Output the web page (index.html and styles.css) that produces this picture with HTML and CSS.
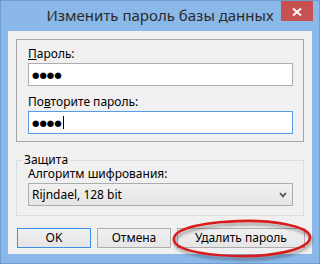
FILE: index.html
```html
<!DOCTYPE html>
<html lang="ru">
<head>
<meta charset="utf-8">
<link rel="stylesheet" href="styles.css">
</head>
<body>
<div class="window">
  <div class="titlebar">
    <span></span>
    <div class="title">Изменить пароль базы данных</div>
    <div class="close"><svg width="10" height="8" viewBox="0 0 10 8"><path d="M1 0.5 L9 7.5 M9 0.5 L1 7.5" stroke="#fff" stroke-width="2"/></svg></div>
  </div>
  <div class="client">
    <div class="panel">
      <div class="lbl"><u>П</u>ароль:</div>
      <div class="field"><span class="dots">●●●●</span></div>
      <div class="lbl lbl2">По<u>в</u>торите пароль:</div>
      <div class="field focused"><span class="dots">●●●●</span><span class="caret"></span></div>
    </div>
    <fieldset class="group">
      <legend>Защита</legend>
      <div class="lbl lbl3">Алгоритм шифрования:</div>
      <div class="combo"><span>Rijndael, 128 bit</span><svg width="8" height="6" viewBox="0 0 8 6"><path d="M1 1 L4 4.3 L7 1" fill="none" stroke="#555" stroke-width="1.8"/></svg></div>
    </fieldset>
    <div class="buttons">
      <button class="btn default">OK</button>
      <button class="btn">Отмена</button>
      <button class="btn wide">Удалить пароль</button>
    </div>
  </div>
  <svg class="annot" width="320" height="264" viewBox="0 0 320 264">
    <defs>
      <filter id="sh" x="-10%" y="-30%" width="130%" height="180%">
        <feDropShadow dx="1" dy="3" stdDeviation="1.6" flood-color="#000" flood-opacity="0.35"/>
      </filter>
    </defs>
    <path d="M226 222 C268 218 312 226 310 238 C308 250 272 257 236 256 C196 255 172 248 174 238 C176 228 206 221 248 221" fill="none" stroke="#d71f1f" stroke-width="2.6" stroke-linecap="round" filter="url(#sh)"/>
  </svg>
</div>
</body>
</html>
```
FILE: styles.css
```css
html, body {
  margin: 0;
  padding: 0;
}
body {
  font-family: "Noto Sans", "DejaVu Sans", sans-serif;
  font-size: 12px;
  color: #000;
  background: #fff;
}
.window {
  position: relative;
  box-sizing: border-box;
  width: 320px;
  height: 264px;
  border: 1px solid #6f9bd0;
  background: #8ab8e8;
  padding: 0 7px 9px;
  display: flex;
  flex-direction: column;
}
.titlebar {
  height: 30px;
  display: grid;
  grid-template-columns: 1fr auto 1fr;
}
.title {
  align-self: start;
  padding-top: 4px;
  font-size: 15px;
  line-height: 20px;
  color: #2b2b2b;
  white-space: nowrap;
}
.close {
  justify-self: end;
  align-self: start;
  width: 32px;
  height: 20px;
  margin-right: -1px;
  background: #c75050;
  display: flex;
  align-items: center;
  justify-content: center;
}
.close svg {
  display: block;
  margin-top: 1px;
}
.client {
  flex: 1;
  background: #f0f0f0;
  padding: 8px 8px 0;
  display: flex;
  flex-direction: column;
}
.panel {
  border: 1px solid #a6a6a6;
  padding: 6px 10px 7px 11px;
  display: flex;
  flex-direction: column;
}
.lbl {
  line-height: 16px;
  margin-bottom: 1px;
  white-space: nowrap;
}
.lbl2 {
  margin-top: 8px;
}
.lbl3 {
  line-height: 13px;
  margin-top: 1px;
  margin-bottom: 3px;
}
.field {
  box-sizing: border-box;
  height: 23px;
  border: 1px solid #abadb3;
  background: #fff;
  display: flex;
  align-items: center;
  padding-left: 3px;
}
.field.focused {
  border-color: #569de5;
}
.dots {
  font-family: "DejaVu Sans", sans-serif;
  font-size: 8.5px;
  letter-spacing: 0;
  line-height: 10px;
}
.caret {
  display: inline-block;
  width: 1px;
  height: 13px;
  background: #000;
  margin-left: 1px;
}
.group {
  margin: 12px 0 0;
  border: 1px solid #dcdcdc;
  padding: 0 10px 9px 11px;
  min-width: 0;
}
.group legend {
  padding: 0 2px;
  margin-left: -6px;
  line-height: 12px;
}
.combo {
  box-sizing: border-box;
  height: 23px;
  border: 1px solid #acacac;
  background: linear-gradient(#f0f0f0, #e5e5e5);
  display: flex;
  align-items: center;
  justify-content: space-between;
  padding: 0 5px 0 3px;
}
.combo svg {
  display: block;
}
.buttons {
  margin: 12px -1px 0 1px;
  display: flex;
  gap: 6px;
}
.btn {
  box-sizing: border-box;
  width: 74px;
  height: 20px;
  padding: 0;
  border: 1px solid #acacac;
  border-radius: 0;
  background: linear-gradient(#f0f0f0, #e5e5e5);
  font-family: inherit;
  font-size: 12px;
  line-height: 16px;
  color: #000;
}
.btn.default {
  border-color: #3c8fe6;
}
.btn.wide {
  width: 128px;
}
.annot {
  position: absolute;
  left: -1px;
  top: -1px;
  pointer-events: none;
}
```
